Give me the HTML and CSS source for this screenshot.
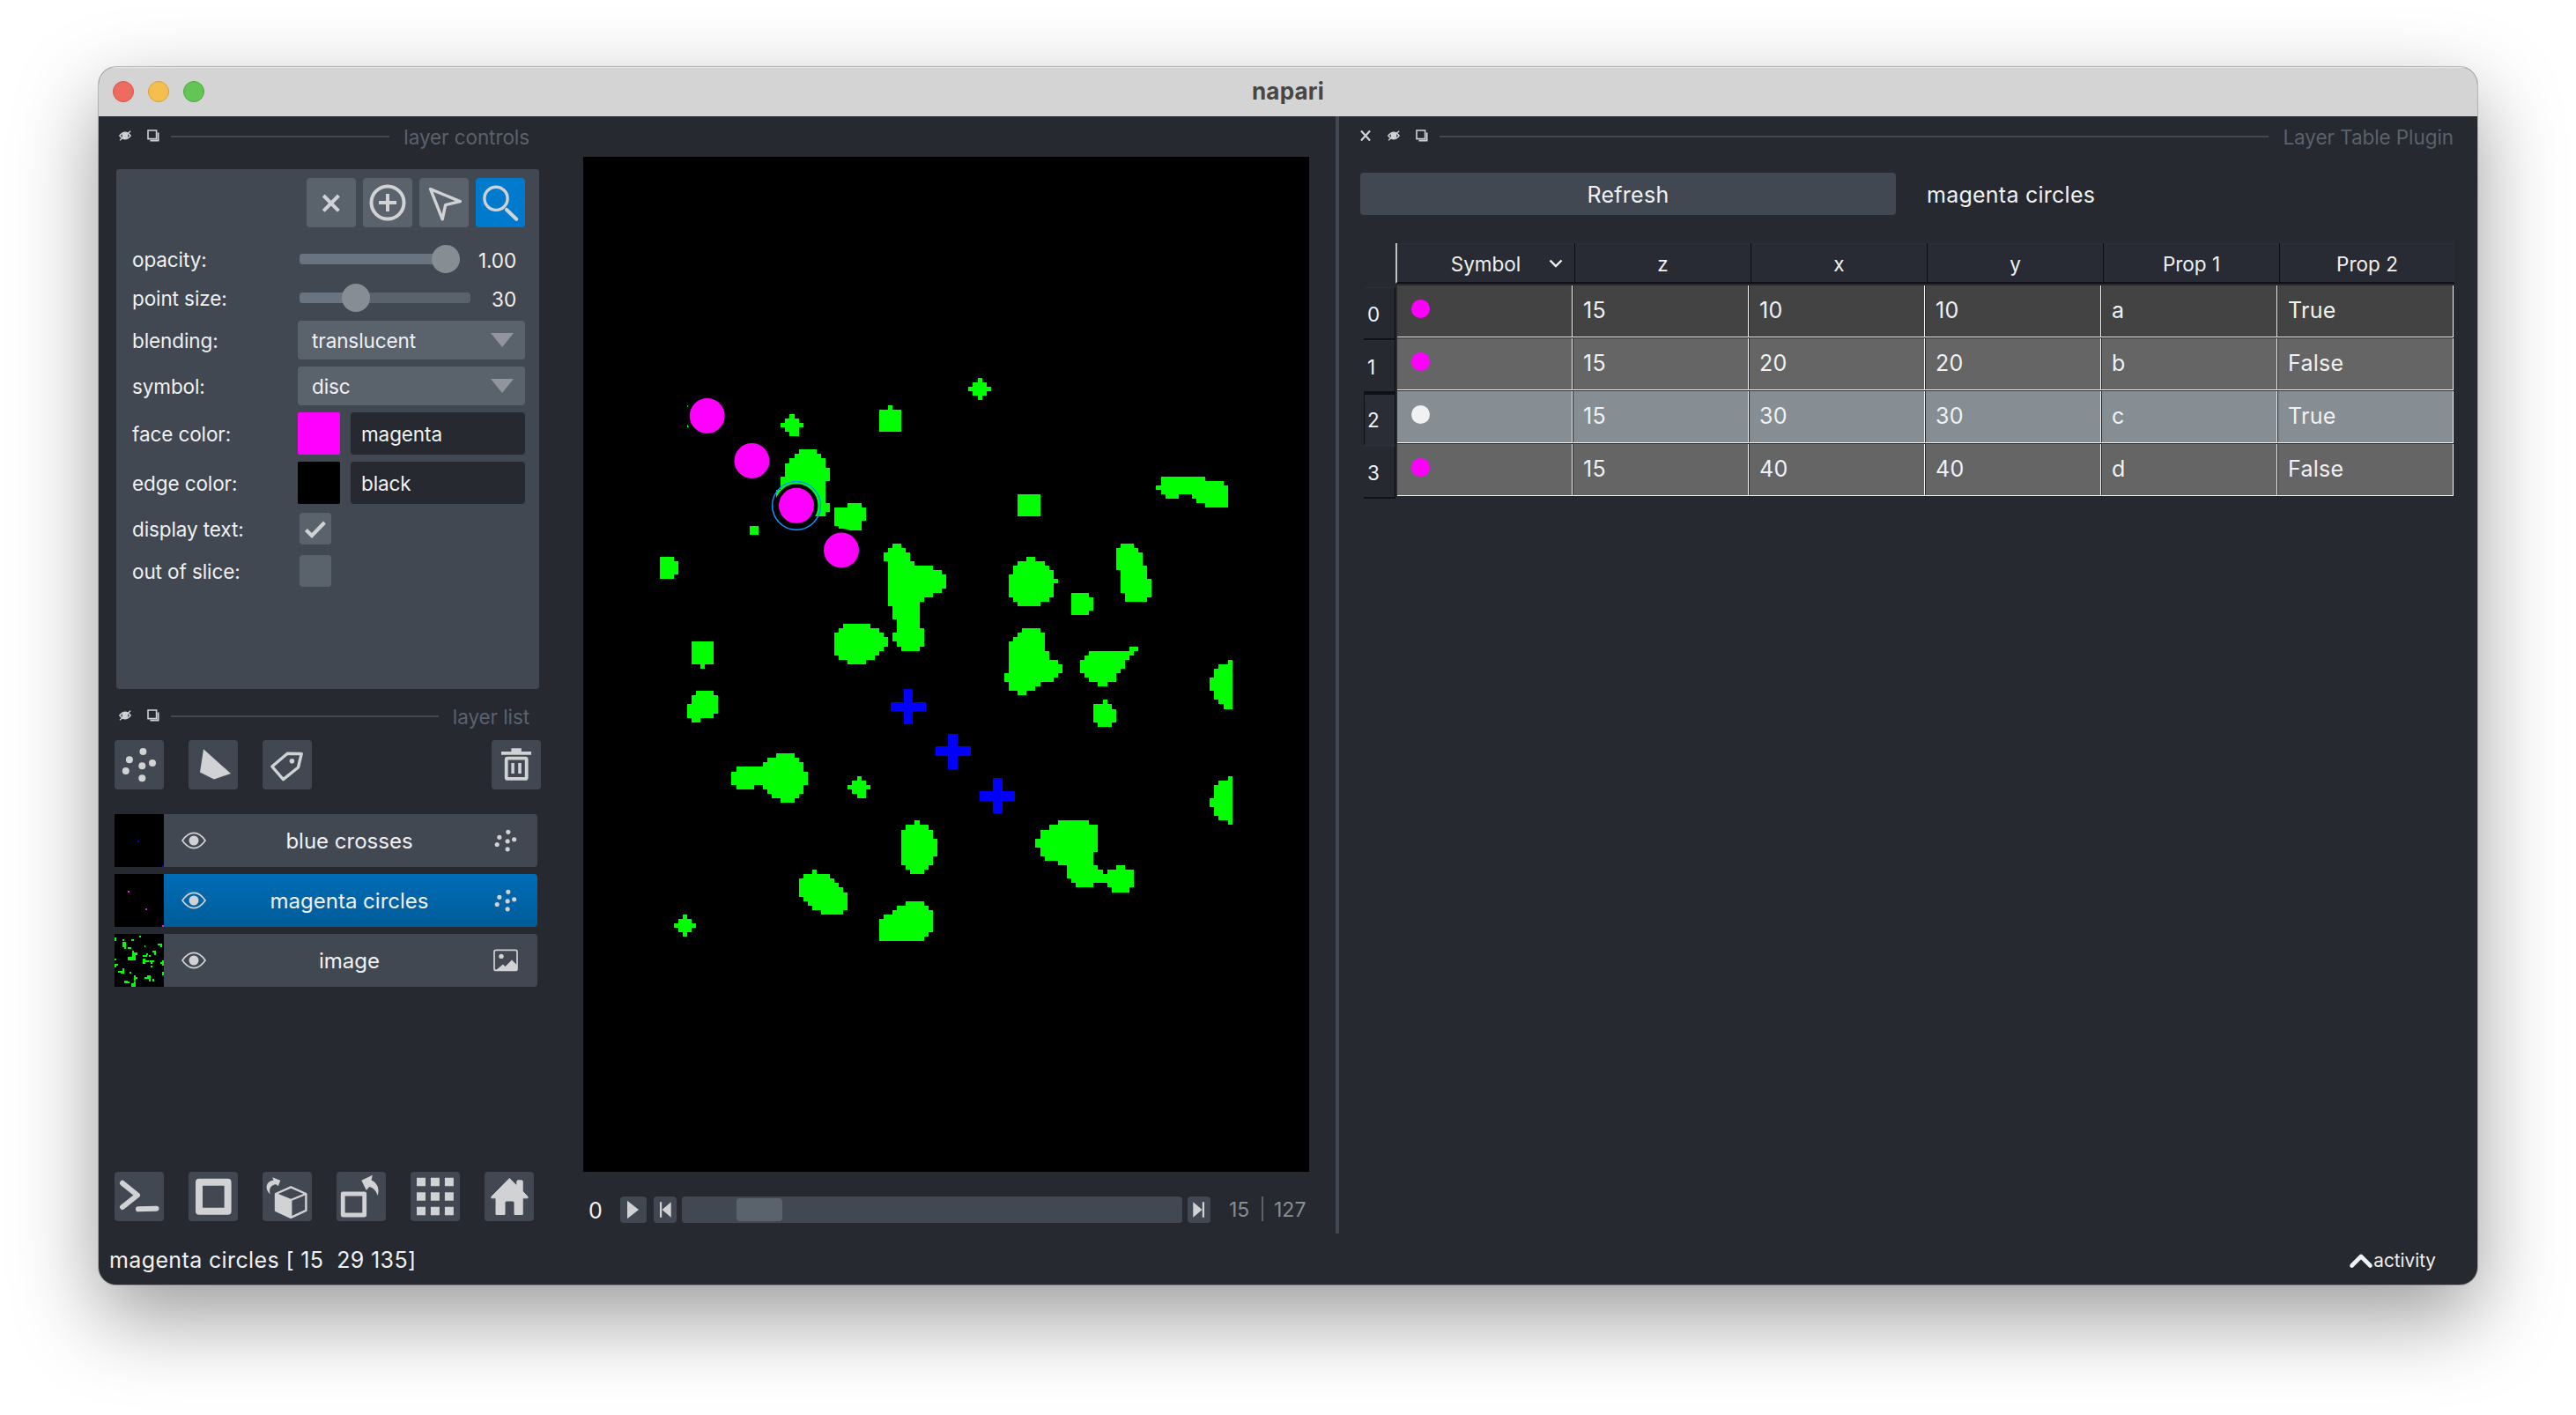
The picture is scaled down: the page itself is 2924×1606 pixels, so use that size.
FILE: index.html
```html
<!DOCTYPE html>
<html lang="en">
<head>
<meta charset="utf-8">
<title>napari</title>
<link rel="stylesheet" href="styles.css">
</head>
<body>
<svg class="defs" width="0" height="0">
  <symbol id="eye-off" viewBox="0 0 14 12"><path d="M.8 6Q7-1.6 13.2 6Q7 13.6.8 6z" fill="none" stroke="currentColor" stroke-width="1.4"/><circle cx="7" cy="6" r="3.3" fill="currentColor"/><path d="M1 11.2L13.2.8" stroke="currentColor" stroke-width="1.4"/></symbol>
  <symbol id="popup" viewBox="0 0 14 14"><path d="M1 1H10.6V10.6H1z" fill="none" stroke="currentColor" stroke-width="1.6"/><path d="M12.6 3.4V12.7H3.4" fill="none" stroke="currentColor" stroke-width="1.8"/></symbol>
  <symbol id="eye" viewBox="0 0 28 20"><path d="M1 10Q7 1.4 14 1.4T27 10Q21 18.6 14 18.6T1 10z" fill="none" stroke="currentColor" stroke-width="1.7"/><circle cx="14" cy="10" r="5.5" fill="currentColor"/></symbol>
  <symbol id="points" viewBox="0 0 56 56"><g fill="currentColor"><circle cx="32.4" cy="13" r="4"/><circle cx="16.9" cy="22.3" r="4"/><circle cx="43" cy="26" r="4"/><circle cx="31.3" cy="29.3" r="4"/><circle cx="12.8" cy="35" r="4"/><circle cx="31.3" cy="43.3" r="4"/></g></symbol>
</svg>
<div class="window">
  <header class="titlebar">
    <div class="lights"><i class="light red"></i><i class="light yellow"></i><i class="light green"></i></div>
    <span>napari</span>
  </header>

  <main class="main">
    <aside class="sidebar">
      <div class="dock">
        <svg class="ic-eyeoff"><use href="#eye-off"/></svg><svg class="ic-popup"><use href="#popup"/></svg>
        <span class="rule"></span><span class="t-dock">layer controls</span>
      </div>
      <section class="controls">
        <div class="tools">
          <button class="tool"><svg viewBox="0 0 56 56"><path d="M19.2 20L36.4 37.4M36.4 20L19.2 37.4" fill="none" stroke="currentColor" stroke-width="4"/></svg></button>
          <button class="tool"><svg viewBox="0 0 56 56"><g fill="none" stroke="currentColor" stroke-width="4"><circle cx="28" cy="28" r="18.5"/><path d="M18 28H38M28 18V38"/></g></svg></button>
          <button class="tool"><svg viewBox="0 0 56 56"><path d="M12.6 12.6L46.3 26.6L29.6 30.6L26.2 46.8z" fill="none" stroke="currentColor" stroke-width="3.4" stroke-linejoin="round"/></svg></button>
          <button class="tool active"><svg viewBox="0 0 56 56"><circle cx="23" cy="23.3" r="13.1" fill="none" stroke="currentColor" stroke-width="3.4"/><path d="M35 36L46.2 46.8" stroke="currentColor" stroke-width="4.2" stroke-linecap="round"/></svg></button>
        </div>
        <div class="row"><label>opacity:</label><div class="slider w1"><i class="fill full"></i><i class="knob"></i></div><span class="val">1.00</span></div>
        <div class="row"><label>point size:</label><div class="slider w2"><i class="fill part"></i><i class="knob"></i></div><span class="val">30</span></div>
        <div class="row tall"><label>blending:</label><div class="combo"><span>translucent</span><i class="arrow"></i></div></div>
        <div class="row tall"><label>symbol:</label><div class="combo"><span>disc</span><i class="arrow"></i></div></div>
        <div class="row big"><label>face color:</label><i class="swatch magenta"></i><div class="field"><span>magenta</span></div></div>
        <div class="row big"><label>edge color:</label><i class="swatch black"></i><div class="field"><span>black</span></div></div>
        <div class="row mid"><label>display text:</label><i class="check"><svg viewBox="0 0 36 36"><path d="M7.4 19.4L14 26L28.4 11" fill="none" stroke="currentColor" stroke-width="4.2"/></svg></i></div>
        <div class="row mid"><label>out of slice:</label><i class="check"></i></div>
      </section>

      <div class="dock second">
        <svg class="ic-eyeoff"><use href="#eye-off"/></svg><svg class="ic-popup"><use href="#popup"/></svg>
        <span class="rule"></span><span class="t-dock">layer list</span>
      </div>
      <div class="btns">
        <button class="btn"><svg><use href="#points"/></svg></button>
        <button class="btn"><svg viewBox="0 0 56 56"><path d="M17 10.3L48 38L29 44.5L13 36.5z" fill="currentColor"/></svg></button>
        <button class="btn"><svg viewBox="0 0 56 56"><path d="M28.2 15.2L44.2 15.5L40.5 31L23.5 44.6L10.8 30z" fill="none" stroke="currentColor" stroke-width="3.4" stroke-linejoin="round"/><circle cx="33.4" cy="23.8" r="2.8" fill="currentColor"/></svg></button>
        <button class="btn trash"><svg viewBox="0 0 56 56"><path d="M11 13H22.4V9.2H33.8V13H45V16.8H11z" fill="currentColor"/><rect x="16.7" y="20.6" width="23" height="23.3" rx="1.5" fill="none" stroke="currentColor" stroke-width="3.8"/><path d="M22.4 26H25.8V38H22.4zM30.2 26H33.8V38H30.2z" fill="currentColor"/></svg></button>
      </div>
      <div class="layers">
        <div class="layer"><svg class="thumb" viewBox="0 0 56 60"><path fill="#00f" d="M26 30h2v2h-2zM54 58h2v2h-2z"/></svg><svg class="ic-eye"><use href="#eye"/></svg><span class="name">blue crosses</span><svg class="kind"><use href="#points"/></svg></div>
        <div class="layer selected"><svg class="thumb" viewBox="0 0 56 60"><path fill="#f0f" d="M15 19h2v2h-2zM35 39h2v2h-2zM54 58h2v2h-2z"/></svg><svg class="ic-eye"><use href="#eye"/></svg><span class="name">magenta circles</span><svg class="kind"><use href="#points"/></svg></div>
        <div class="layer"><svg class="thumb" viewBox="0 0 56 60"><path fill="#0f0" d="M0 4h2v4h-2zM28 2h2v2h-2zM9 6h2v2h-2zM19 6h3v2h-3zM9 9h4v6h-4zM11 15h2v2h-2zM15 15h4v2h-4zM49 11h5v2h-5zM52 13h2v2h-2zM34 13h1v2h-1zM43 19h4v2h-4zM45 21h2v3h-2zM20 19h2v2h-2zM22 21h4v3h-4zM20 21h4v9h-4zM15 26h5v4h-5zM36 22h2v2h-2zM32 24h5v2h-5zM39 24h2v2h-2zM32 28h3v6h-3zM35 30h4v2h-4zM40 30h5v2h-5zM41 32h2v2h-2zM41 36h2v2h-2zM54 30h2v6h-2zM52 32h2v2h-2zM0 28h2v2h-2zM0 34h4v2h-4zM0 36h2v2h-2zM9 39h2v3h-2zM4 42h7v2h-7zM7 44h4v1h-4zM17 43h2v2h-2zM54 43h2v4h-2zM22 47h2v2h-2zM22 49h4v2h-4zM22 51h2v2h-2zM22 54h2v6h-2zM19 56h5v4h-5zM37 47h4v3h-4zM34 49h7v2h-7zM39 51h2v3h-2zM43 51h2v3h-2zM11 53h4v3h-4zM15 54h2v2h-2z"/></svg><svg class="ic-eye"><use href="#eye"/></svg><span class="name">image</span><svg class="kind pic" viewBox="0 0 30 30"><rect x="2" y="3.4" width="26" height="23" rx="2" fill="none" stroke="currentColor" stroke-width="1.7"/><circle cx="10" cy="10.4" r="2.7" fill="currentColor"/><path d="M4 26L12 19.5L14.5 22L22 14.5L28 20.5V26z" fill="currentColor"/></svg></div>
      </div>
      <div class="btns bottom">
        <button class="btn"><svg viewBox="0 0 56 56"><path d="M9 12.8L26 26.5L9 40M27 42.3L47.5 41.7" fill="none" stroke="currentColor" stroke-width="6" stroke-linecap="round" stroke-linejoin="round"/></svg></button>
        <button class="btn"><svg viewBox="0 0 56 56"><rect x="12" y="11.8" width="32.6" height="33" fill="none" stroke="currentColor" stroke-width="8" stroke-linejoin="round"/></svg></button>
        <button class="btn"><svg viewBox="0 0 56 56"><path d="M32.2 17.3L49.4 25V43.8L32.2 51.8L15 43.8V25zM15 25L32.2 32L49.4 25M32.2 32V51.8" fill="none" stroke="currentColor" stroke-width="2.4" stroke-linejoin="round"/><path d="M15 25L32.2 32V51.8L15 43.8z" fill="currentColor"/><path d="M8.8 25.5C2 19.5 3.6 10.8 12.4 9.5L11.2 6.3L20.3 9.7L17.8 16.3L15.5 14.2C10 14.6 6.6 18.8 8.8 25.5z" fill="currentColor"/></svg></button>
        <button class="btn"><svg viewBox="0 0 56 56"><rect x="7.2" y="25" width="24.5" height="24" fill="none" stroke="currentColor" stroke-width="4.8" stroke-linejoin="round"/><path d="M28.3 9.7L40.8 3.8L39.6 9.6C46.5 12.8 49 19.5 46.8 27C44.8 21.5 42 18.2 37.2 17L33.8 21z" fill="currentColor"/></svg></button>
        <button class="btn"><svg viewBox="0 0 56 56"><path fill="currentColor" d="M7 6.8h10v9.4h-10zM22.9 6.8h10v9.4h-10zM38.9 6.8h10v9.4h-10zM7 23.3h10v9.4h-10zM22.9 23.3h10v9.4h-10zM38.9 23.3h10v9.4h-10zM7 39.8h10v9.4h-10zM22.9 39.8h10v9.4h-10zM38.9 39.8h10v9.4h-10z"/></svg></button>
        <button class="btn"><svg viewBox="0 0 56 56"><path d="M28.2 7.5L36.8 16V11Q36.8 9.8 38 9.8H42Q43.2 9.8 43.2 11V22L49 28.3V29.8H43.2V48.5H34V35Q34 33 32 33H25Q23 33 23 35V48.5H13V29.8H7.8V28.3z" fill="currentColor" stroke="currentColor" stroke-linejoin="round"/></svg></button>
      </div>
    </aside>

    <section class="viewer">
      <svg class="canvas" viewBox="662 178 824 1152">
        <g fill="#0f0" shape-rendering="crispEdges">
          <g transform="translate(720 410) scale(.3333333)">
            <path d="M528 180H546V195H561V210H576V225H561V255H528V240H513V225H498V210H513V195H528zM864 150H879V165H909V240H834V165H864z"/>
            <path d="M561 300H621V315H636V330H651V363H666V408H651V483H666V513H651V528H600V500H483V438H498V393H513V348H528V330H546V315H561z"/>
            <path d="M726 483H774V498H789V543H774V576H711V570H696V561H681V498H726zM393 561H423V591H393zM87 666H135V681H150V726H135V741H87zM180 150H255V225H180z"/>
          </g>
          <g transform="translate(940 410) scale(.3333333)">
            <path d="M510 57H525V72H540V87H555V102H540V117H525V132H510V117H492V102H477V87H492V72H510z"/>
            <path d="M1134 393H1284V408H1347V423H1362V498H1284V483H1254V468H1239V453H1194V468H1149V453H1134V438H1116V423H1134zM645 453H723V528H645z"/>
            <path d="M219 621H249V636H264V651H279V681H294V696H357V711H387V726H402V774H387V789H357V804H327V819H312V909H327V972H312V987H249V972H234V954H219V924H234V879H219V834H204V681H189V651H204V636H219z"/>
            <path d="M675 666H705V681H738V696H753V711H768V741H783V756H768V804H753V819H723V834H645V819H630V804H615V726H630V696H645V681H675zM828 789H888V804H903V849H888V864H828z"/>
            <path d="M996 621H1041V636H1056V651H1071V696H1086V741H1101V804H1086V819H1011V789H996V711H981V636H996z"/>
            <path d="M51 894H144V909H174V924H189V939H204V972H189V987H174V1002H159V1017H129V1032H66V1017H36V1002H21V924H36V909H51z"/>
            <path d="M660 909H723V924H738V987H753V1017H783V1032H798V1062H783V1077H768V1092H723V1107H705V1122H675V1137H645V1122H615V1092H600V1062H615V954H630V939H645V924H660z"/>
            <path d="M1026 972H1056V987H1041V1002H1026V1017H1011V1047H996V1062H981V1092H951V1107H918V1092H888V1077H873V1062H858V1017H873V1002H888V987H1026z"/>
            <path d="M1362 1017H1377V1185H1347V1167H1329V1152H1314V1122H1299V1077H1314V1047H1329V1032H1362zM936 1152H951V1167H966V1185H981V1230H966V1245H918V1230H903V1167H936z"/>
          </g>
          <g transform="translate(740 720) scale(.3333333)">
            <path d="M135 24H210V102H180V117H165V102H135zM150 192H210V207H225V270H210V285H165V300H135V285H120V237H135V207H150z"/>
            <path d="M423 405H486V420H501V435H516V468H531V513H516V543H501V558H486V573H438V558H408V543H393V528H378V513H348V528H288V513H270V468H288V450H378V435H393V420H423z"/>
            <path d="M699 483H714V498H729V513H744V528H729V558H699V543H681V528H666V513H681V498H699zM894 633H912V648H942V666H957V696H972V756H957V786H942V801H927V816H879V801H864V786H849V666H864V648H894z"/>
            <path d="M546 801H561V816H606V831H621V846H636V861H651V879H666V939H651V954H576V939H546V924H531V909H516V894H501V831H516V816H546z"/>
            <path d="M864 909H927V924H942V939H957V1014H942V1029H927V1044H774V969H789V954H819V939H834V924H864zM105 954H120V969H135V984H150V999H135V1014H120V1029H105V1014H90V999H75V984H90V969H105z"/>
          </g>
          <g transform="translate(1060 720) scale(.3333333)">
            <path d="M1002 483H1017V648H1002V633H969V618H954V588H939V558H954V513H969V498H1002z"/>
            <path d="M423 633H528V648H558V741H543V786H558V801H576V816H591V801H621V786H651V801H681V861H666V879H606V861H591V846H543V861H483V846H468V831H453V786H423V771H378V756H363V726H345V696H363V666H393V648H423z"/>
          </g>
        </g>
        <g fill="#f0f" stroke="#000" stroke-width="4.5">
          <circle cx="802.7" cy="472" r="22.2"/><circle cx="853.4" cy="523" r="22.2"/><circle cx="904" cy="573.8" r="22.2"/><circle cx="955" cy="624.5" r="22.2"/>
        </g>
        <circle cx="904" cy="573.8" r="27.4" fill="none" stroke="#0a95ff" stroke-width="1.5"/>
        <g fill="#00f" shape-rendering="crispEdges">
          <path transform="translate(940 410) scale(.3333333)" d="M258 1116H288V1161H333V1191H288V1236H258V1191H213V1161H258z"/>
          <path transform="translate(1060 720) scale(.3333333)" d="M48 339H81V381H126V414H81V459H48V414H6V381H48zM201 489H234V534H276V567H234V610H201V567H156V534H201z"/>
        </g>
      </svg>
      <div class="dims">
        <span class="axis">0</span>
        <button class="play"><svg viewBox="0 0 30 30"><path d="M8 4.8L21 15L8 25.2z" fill="currentColor"/></svg></button>
        <button class="step"><svg viewBox="0 0 26 30"><path d="M19.7 6.2L9.5 15L19.7 23.8zM7 6.2H9.2V23.8H7z" fill="currentColor"/></svg></button>
        <div class="scroll"><i></i></div>
        <button class="step"><svg viewBox="0 0 26 30"><path d="M6.3 6.2L16.5 15L6.3 23.8zM16.8 6.2H19V23.8H16.8z" fill="currentColor"/></svg></button>
        <span class="cur">15</span><i class="bar"></i><span class="max">127</span>
      </div>
    </section>
    <i class="splitter"></i>

    <section class="plugin">
      <div class="dock">
        <svg class="ic-close" viewBox="0 0 14 14"><path d="M2 1.5L12 12.5M12 1.5L2 12.5" stroke="currentColor" stroke-width="2.2"/></svg><svg class="ic-eyeoff"><use href="#eye-off"/></svg><svg class="ic-popup"><use href="#popup"/></svg>
        <span class="rule"></span><span class="t-dock">Layer Table Plugin</span>
      </div>
      <div class="bar-top"><button class="refresh">Refresh</button><span class="current">magenta circles</span></div>
      <div class="table">
        <div class="head">
          <div class="h first"><span>Symbol</span><svg class="sort" viewBox="0 0 16 10"><path d="M1.5 1.5L8 8L14.5 1.5" fill="none" stroke="currentColor" stroke-width="2.4"/></svg></div>
          <div class="h">z</div><div class="h">x</div><div class="h">y</div><div class="h">Prop 1</div><div class="h">Prop 2</div>
        </div>
        <div class="body">
          <div class="idx"><span>0</span><span>1</span><span class="on">2</span><span>3</span></div>
          <div class="cells">
            <div class="tr r0"><div><i class="dot"></i></div><div>15</div><div>10</div><div>10</div><div>a</div><div>True</div></div>
            <div class="tr"><div><i class="dot"></i></div><div>15</div><div>20</div><div>20</div><div>b</div><div>False</div></div>
            <div class="tr sel"><div><i class="dot"></i></div><div>15</div><div>30</div><div>30</div><div>c</div><div>True</div></div>
            <div class="tr"><div><i class="dot"></i></div><div>15</div><div>40</div><div>40</div><div>d</div><div>False</div></div>
          </div>
        </div>
      </div>
    </section>
  </main>

  <footer class="status">
    <span class="msg">magenta circles [ 15&nbsp; 29 135]</span>
    <span class="activity"><svg viewBox="0 0 28 18"><path d="M3.5 14.5L14 4L24.5 14.5" fill="none" stroke="currentColor" stroke-width="4.6" stroke-linecap="round" stroke-linejoin="round"/></svg><span>activity</span></span>
  </footer>
</div>
</body>
</html>
```
FILE: styles.css
```css
* { box-sizing: border-box; }
body { margin: 0; width: 2924px; height: 1606px; overflow: hidden; background: #fff; font-family: Inter, "Liberation Sans", sans-serif; color: #f0f1f2; }
i { font-style: normal; display: block; }
button { border: 0; padding: 0; font: inherit; color: inherit; letter-spacing: inherit; display: block; }
svg { display: block; overflow: visible; }
span, label { white-space: nowrap; }
.defs { position: absolute; }

.window { margin: 76px 112px 0; width: 2700px; height: 1382px; border-radius: 20px; background: #262930; overflow: hidden; display: flex; flex-direction: column; box-shadow: 0 0 0 1px rgba(0,0,0,.22), 0 36px 96px rgba(0,0,0,.4); }
.titlebar { height: 56px; padding-bottom: 2px; background: #d4d4d4; box-shadow: inset 0 1px 0 #e9e9e9; display: grid; grid-template-columns: 1fr auto 1fr; align-items: center; font-weight: 700; font-size: 26px; letter-spacing: .2px; color: #464646; }
.lights { display: flex; gap: 16px; padding: 2px 0 0 16px; }
.light { width: 24px; height: 24px; border-radius: 50%; }
.red { background: #ed6b5f; border: 1px solid #d65347; }
.yellow { background: #f5bf4f; border: 1px solid #d9a13b; }
.green { background: #62c655; border: 1px solid #4fa73e; }

.main { display: flex; height: 1270px; }
.main > * { flex-shrink: 0; }
.sidebar { width: 550px; display: flex; flex-direction: column; padding-bottom: 16px; }
.dock { height: 46px; padding: 0 62px 0 23px; display: flex; align-items: center; color: #d1d2d4; }
.dock.second { margin-top: 8px; }
.ic-eyeoff { width: 14px; height: 12px; margin: 0 18px 2px 0; }
.ic-popup { width: 14px; height: 14px; margin: 0 13px 2px 0; }
.ic-close { width: 14px; height: 14px; margin: 0 18px 2px 0; }
.rule { flex: 1; height: 2px; background: #414851; margin-right: 16px; }
.sidebar .t-dock { margin-right: -1px; }
.t-dock { font-size: 22.5px; letter-spacing: -.08px; color: #5a626c; }

.controls { width: 480px; height: 590px; margin: 14px 0 0 20px; background: #414851; border-radius: 4px; padding: 10px 16px 0 18px; font-size: 22.5px; letter-spacing: -.1px; }
.tools { display: flex; justify-content: flex-end; gap: 8px; margin-bottom: 14px; }
.tool { width: 56px; height: 56px; border-radius: 4px; background: #5a626c; color: #d1d2d4; }
.tool.active { background: #007acc; }
.row { height: 44px; display: grid; grid-template-columns: 188px 1fr auto; align-items: center; }
.row.tall { height: 52px; }
.row.big { height: 56px; grid-template-columns: 188px 60px 1fr; }
.row.mid { height: 48px; }
.slider { position: relative; height: 12px; width: 194px; margin-left: 2px; border-radius: 4px; background: #5a626c; }
.w1 { width: 180px; }
.fill { height: 12px; border-radius: 4px; background: #6a7380; }
.full { width: 166px; }
.part { width: 64px; }
.knob { position: absolute; top: -10px; width: 32px; height: 32px; border-radius: 50%; background: #868e93; }
.w1 .knob { left: 150px; }
.w2 .knob { left: 48px; }
.val { padding: 2px 10px 0 0; }
.combo { grid-column: 2 / 4; height: 44px; background: #5a626c; border-radius: 4px; padding: 0 13px 0 16px; display: flex; align-items: center; justify-content: space-between; }
.arrow { width: 26px; height: 16px; background: #90959e; clip-path: polygon(0 0, 100% 0, 50% 100%); }
.swatch { width: 48px; height: 48px; border-radius: 2px; }
.swatch.magenta { background: #f0f; }
.swatch.black { background: #000; }
.field { height: 48px; border-radius: 4px; background: #262930; padding: 1px 0 0 12px; display: flex; align-items: center; }
.check { width: 36px; height: 36px; margin-left: 2px; border-radius: 4px; background: #5a626c; color: #d1d2d4; }

.btns { display: flex; gap: 28px; padding: 0 48px 0 18px; margin-top: 4px; }
.btn { width: 56px; height: 56px; border-radius: 4px; background: #414851; color: #d1d2d4; }
.btn svg { width: 56px; height: 56px; }
.trash { margin-left: auto; }
.bottom { margin-top: auto; }
.layers { margin: 28px 0 0 18px; width: 480px; display: flex; flex-direction: column; gap: 8px; }
.layer { height: 60px; background: #414851; border-radius: 0 4px 4px 0; display: grid; grid-template-columns: 56px 20px 28px 1fr 30px 21px; align-items: center; font-size: 24px; }
.layer.selected { background: linear-gradient(#006db7, #005c99); }
.thumb { width: 56px; height: 60px; background: #000; shape-rendering: crispEdges; }
.ic-eye { grid-column: 3; width: 28px; height: 20px; color: #d1d2d4; }
.name { text-align: center; }
.kind { width: 36px; height: 36px; margin-left: -3px; color: #d1d2d4; }
.kind.pic { width: 30px; height: 30px; margin-left: 0; }

.viewer { width: 824px; padding-top: 46px; }
.canvas { width: 824px; height: 1152px; background: #000; }
.dims { margin-top: 28px; height: 30px; display: flex; align-items: center; font-size: 25px; }
.axis { width: 42px; padding: 1px 0 0 6px; }
.play, .step { height: 30px; width: 30px; border-radius: 4px; background: #414851; color: #d1d2d4; }
.step { width: 26px; margin-left: 8px; }
.scroll + .step { margin-left: 6px; }
.scroll { margin-left: 6px; width: 568px; height: 30px; border-radius: 4px; background: #414851; padding: 2px 62px; }
.scroll i { width: 52px; height: 26px; border-radius: 4px; background: #5a626c; }
.cur, .max { font-size: 23px; color: #868e93; }
.cur { margin-left: 21px; width: 37px; }
.bar { width: 2px; height: 28px; background: #5a626c; margin: 0 12px 2px 0; }
.splitter { width: 4px; height: 1268px; margin-left: 30px; background: #414851; }

.plugin { width: 1292px; padding-left: 24px; }
.plugin .dock { width: 1242px; padding: 0; margin-left: -1px; }
.bar-top { margin-top: 18px; height: 48px; display: flex; align-items: center; gap: 35px; font-size: 25px; letter-spacing: .25px; }
.refresh, .current { padding-top: 1px; }
.refresh { width: 608px; height: 48px; border-radius: 4px; background: #414851; }
.table { margin-top: 32px; padding-left: 4px; }
.head { margin-left: 36px; height: 48px; display: grid; grid-template-columns: 204px repeat(4, 200px) 198px; grid-template-rows: 46px; font-size: 22.5px; }
.h { display: flex; align-items: center; justify-content: center; padding-top: 3px; background: #282b33; border-right: 1px solid #0c0d10; border-bottom: 2px solid #101116; box-shadow: inset 0 1px 0 #2c2f37; }
.h:last-child { border-right: 0; }
.first { position: relative; border-left: 2px solid #c2c2c2; }
.sort { position: absolute; right: 13px; top: 18px; width: 16px; height: 10px; }
.body { display: flex; }
.idx { width: 38px; padding-top: 2px; font-size: 22.5px; }
.idx span { display: flex; align-items: center; width: 36px; height: 60px; padding: 3px 0 0 4px; border-right: 1px solid #0c0d10; border-bottom: 2px solid #101116; box-shadow: inset 0 1px 0 #2c2f37; }
.idx .on { border-left: 1px solid #101116; background: #2a2d35; border-top: 2px solid #101116; border-bottom-color: #2c2f37; padding: 1px 0 0 3px; }
.cells { width: 1200px; font-size: 25px; letter-spacing: .25px; }
.tr { display: grid; grid-template-columns: repeat(6, 198px); gap: 2px; height: 60px; background: linear-gradient(transparent 58px, #f0f1f2 58px, #f0f1f2 59px, transparent 59px) no-repeat 0 0 / 1199px 60px; --c: #656565; }
.tr > div { height: 58px; padding: 0 0 2px 11px; display: flex; align-items: center; background: var(--c); box-shadow: 1px 0 0 #f0f1f2; }
.tr > div:first-child { padding: 0 0 5px 16px; }
.r0 { --c: #434343; }
.sel { --c: #868e93; }
.dot { width: 21px; height: 21px; border-radius: 50%; background: #f0f; }
.sel .dot { background: #f0f1f2; }

.status { height: 56px; padding: 0 47px 0 12px; display: flex; align-items: center; justify-content: space-between; font-size: 25px; }
.msg { letter-spacing: .37px; }
.activity { display: flex; align-items: center; font-size: 20.7px; }
.activity svg { width: 28px; height: 18px; margin-top: 2px; }
```
